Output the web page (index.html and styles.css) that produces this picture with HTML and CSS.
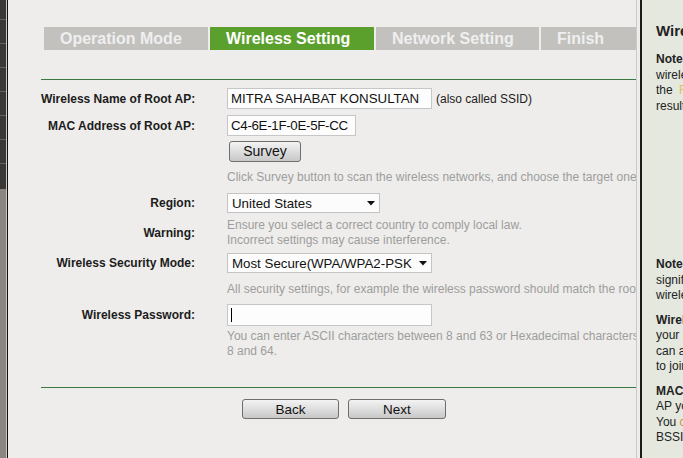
FILE: index.html
```html
<!DOCTYPE html>
<html lang="en">
<head>
    <meta charset="UTF-8">
    <meta name="viewport" content="width=device-width, initial-scale=1.0">
    <title>Quick Setup - Wireless Setting</title>
    <link rel="stylesheet" href="styles.css">
</head>
<body>
    <div class="sidebar">
        <div class="nav">
            <div class="nav-item first"></div>
            <div class="nav-item"></div>
            <div class="nav-item"></div>
            <div class="nav-item"></div>
            <div class="nav-item"></div>
            <div class="nav-item"></div>
            <div class="nav-item"></div>
            <div class="nav-item last"></div>
        </div>
    </div>

    <div class="main">
        <div class="tabs">
            <div class="tab tab-wide">Operation Mode</div>
            <div class="tab tab-wide active">Wireless Setting</div>
            <div class="tab tab-mid">Network Setting</div>
            <div class="tab tab-small">Finish</div>
        </div>

        <div class="form">
            <div class="row row-first">
                <label for="ssid">Wireless Name of Root AP:</label>
                <div class="field">
                    <input type="text" id="ssid" class="text-input w-long" value="MITRA SAHABAT KONSULTAN">
                    <span class="aside">(also called SSID)</span>
                </div>
            </div>

            <div class="row gap-6">
                <label for="mac">MAC Address of Root AP:</label>
                <div class="field">
                    <input type="text" id="mac" class="text-input w-short" value="C4-6E-1F-0E-5F-CC">
                </div>
            </div>

            <div class="row gap-5">
                <span></span>
                <div class="field">
                    <button class="btn btn-survey">Survey</button>
                </div>
            </div>

            <div class="row gap-8">
                <span></span>
                <div class="hint">Click Survey button to scan the wireless networks, and choose the target one to connect.</div>
            </div>

            <div class="row gap-8">
                <label>Region:</label>
                <div class="field">
                    <div class="select w-region">
                        <span>United States</span>
                        <svg width="8" height="5" viewBox="0 0 8 5"><polygon points="0,0 8,0 4,4.5" fill="#111"/></svg>
                    </div>
                </div>
            </div>

            <div class="row gap-5">
                <label>Warning:</label>
                <div class="hint">Ensure you select a correct country to comply local law.<br>Incorrect settings may cause interference.</div>
            </div>

            <div class="row gap-5">
                <label>Wireless Security Mode:</label>
                <div class="field">
                    <div class="select w-long">
                        <span>Most Secure(WPA/WPA2-PSK</span>
                        <svg width="8" height="5" viewBox="0 0 8 5"><polygon points="0,0 8,0 4,4.5" fill="#111"/></svg>
                    </div>
                </div>
            </div>

            <div class="row gap-9">
                <span></span>
                <div class="hint">All security settings, for example the wireless password should match the root AP.</div>
            </div>

            <div class="row gap-7">
                <label for="pw">Wireless Password:</label>
                <div class="field">
                    <span class="pw">
                        <input type="text" id="pw" class="text-input w-long tall" value="">
                    </span>
                </div>
            </div>

            <div class="row gap-3">
                <span></span>
                <div class="hint">You can enter ASCII characters between 8 and 63 or Hexadecimal characters between<br>8 and 64.</div>
            </div>
        </div>

        <div class="actions">
            <button class="btn btn-nav">Back</button>
            <button class="btn btn-nav btn-next">Next</button>
        </div>
    </div>

    <div class="help">
        <h2>Wireless Setting Help</h2>
        <p><b>Note:</b> Please make sure that the<br>wireless name and password of<br>the <span class="hl">Root AP</span> are correct, or the<br>result will not be successful.</p>
        <p class="far"><b>Note:</b> The operating distance or range<br>significantly depends on the<br>wireless environment.</p>
        <p><b>Wireless Name of Root AP</b> - Enter<br>your root AP's SSID here. You<br>can also click Survey and choose<br>to join the network.</p>
        <p><b>MAC Address of Root AP</b> - The MAC<br>AP you want to connect to.<br>You <span class="hl-orange">can</span> also use Survey to find the<br>BSSID.</p>
    </div>
</body>
</html>
```

FILE: styles.css
```css
body {
    margin: 0;
    height: 100vh;
    display: flex;
    overflow: hidden;
    font-family: "Liberation Sans", Arial, sans-serif;
    background: #eeedeb;
    color: #1c1c1c;
}

/* left menu strip, mostly cut off */
.sidebar {
    width: 6px;
    flex-shrink: 0;
    background: #8b867f;
    border-right: 1px solid #cbc8c3;
}

.nav {
    background: #3a3734;
}

.nav-item {
    height: 23px;
    border-bottom: 1px solid #67635f;
}

.nav-item.first {
    height: 19px;
}

.nav-item.last {
    height: 25px;
    border-bottom: none;
}

.main {
    width: 630px;
    flex-shrink: 0;
    box-sizing: border-box;
    border-left: 1px solid #111;
    border-right: 1px solid #c9c9c9;
    margin-right: 3px;
    padding: 27px 0 0 33px;
    overflow: hidden;
}

.tabs {
    display: flex;
    gap: 2px;
    margin-left: 3px;
}

.tab {
    height: 23px;
    line-height: 23px;
    padding-left: 16px;
    box-sizing: border-box;
    flex-shrink: 0;
    background: #c2c1be;
    color: #efefef;
    font-size: 16px;
    font-weight: bold;
    white-space: nowrap;
}

.tab.active {
    background: #5b9f2c;
    color: #fff;
}

.tab-wide { width: 164px; }
.tab-mid { width: 163px; }
.tab-small { width: 95px; }

.form {
    margin-top: 29px;
    border-top: 1px solid #3a7a42;
}

.row {
    display: grid;
    grid-template-columns: 154px 1fr;
    column-gap: 32px;
    align-items: center;
}

.row-first { margin-top: 8px; }
.gap-3 { margin-top: 3px; }
.gap-5 { margin-top: 5px; }
.gap-6 { margin-top: 6px; }
.gap-7 { margin-top: 7px; }
.gap-8 { margin-top: 8px; }
.gap-9 { margin-top: 9px; }

.row label {
    text-align: right;
    font-size: 12px;
    font-weight: bold;
    white-space: nowrap;
}

.field {
    display: flex;
    align-items: center;
    gap: 4px;
}

.aside {
    font-size: 12px;
    color: #222;
    white-space: nowrap;
}

.hint {
    font-size: 12px;
    line-height: 15px;
    color: #9d9d9d;
    white-space: nowrap;
}

.text-input {
    height: 21px;
    box-sizing: border-box;
    margin: 0;
    padding: 0 3px;
    border: 1px solid #c6c6c6;
    background: #fdfdfd;
    font-family: "Liberation Sans", Arial, sans-serif;
    font-size: 13.3px;
    color: #111;
    outline: none;
}

.text-input.tall {
    height: 22px;
}

.w-long { width: 205px; }
.w-region { width: 153px; }

.w-short {
    width: 129px;
    letter-spacing: -0.3px;
}

.pw {
    position: relative;
    display: block;
}

/* text cursor in the empty field */
.pw::after {
    content: "";
    position: absolute;
    left: 4px;
    top: 4px;
    width: 1px;
    height: 14px;
    background: #000;
}

.select {
    height: 20px;
    box-sizing: border-box;
    display: flex;
    align-items: center;
    justify-content: space-between;
    padding: 0 4px;
    border: 1px solid #c4c4c4;
    background: #fcfcfc;
    font-size: 13.3px;
    color: #111;
    white-space: nowrap;
}

.btn {
    height: 21px;
    box-sizing: border-box;
    padding: 0;
    border: 1px solid #6e6e6e;
    border-radius: 3px;
    background: linear-gradient(#f3f3f3, #dedede 50%, #c8c8c8);
    font-family: "Liberation Sans", Arial, sans-serif;
    font-size: 13.5px;
    color: #111;
    line-height: 19px;
}

.btn-survey {
    width: 72px;
    margin-left: 2px;
    font-size: 14px;
}

.actions {
    margin-top: 28px;
    border-top: 1px solid #3a7a42;
    padding: 11px 0 0 201px;
    display: flex;
    gap: 9px;
}

.btn-nav {
    width: 97px;
    height: 20px;
}

.btn-next {
    width: 98px;
}

/* help column on the right, cut off by the window */
.help {
    width: 260px;
    flex-shrink: 0;
    background: #e4e8df;
    border-left: 2px solid #1c1c1c;
    padding: 22px 14px 0;
    color: #222;
}

.help h2 {
    margin: 0 0 12px;
    font-size: 15px;
    line-height: 18px;
    white-space: nowrap;
}

.help p {
    margin: 9px 0 0;
    font-size: 12px;
    line-height: 15.5px;
    white-space: nowrap;
}

.help h2 + p {
    margin-top: 0;
}

.help p.far {
    margin-top: 143px;
}

.hl {
    margin-left: 3px;
    color: #d8c45c;
}

.hl-orange {
    color: #d9903c;
}
```
